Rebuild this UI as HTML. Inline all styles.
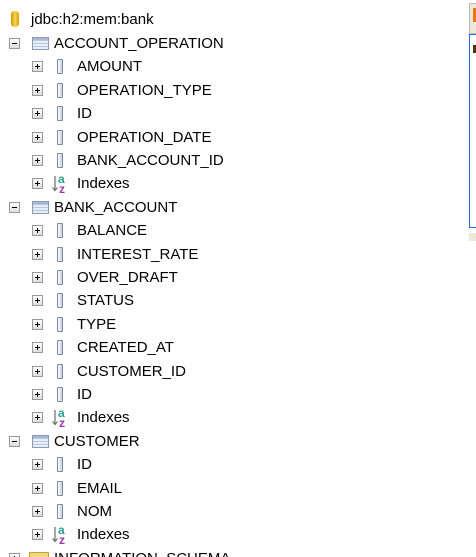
<!DOCTYPE html>
<html><head><style>
html,body{margin:0;width:476px;height:557px;overflow:hidden}
body{background:#fff;font-family:"Liberation Sans",Arial,sans-serif;font-size:15px;color:#000;position:relative}
.r{position:absolute;white-space:nowrap;line-height:18px}
.b{position:absolute;width:9px;height:9px;border:1px solid #999;background:linear-gradient(#fff,#ddd);box-sizing:content-box}
.b:before{content:"";position:absolute;left:2px;top:4px;width:5px;height:1px;background:#000}
.p:after{content:"";position:absolute;left:4px;top:2px;width:1px;height:5px;background:#000}
.c{position:absolute;width:4px;height:13px;border:1px solid #7b8aa6;background:linear-gradient(90deg,#fff,#c8d0e0);border-radius:1px}
.t{position:absolute;width:15px;height:11px;border:1px solid #8a9bb8;background:repeating-linear-gradient(#e8eef8 0 2px,#b9c6dc 2px 3px);}
.t:before{content:"";position:absolute;left:0;top:0;width:15px;height:2px;background:#a8b8d4}
.ix{position:absolute;width:22px;height:20px}
</style></head><body>
<div style="position:absolute;left:11px;top:11px;width:8px;height:16px;background:linear-gradient(90deg,#c89500,#ffd54a,#d8a200);border-radius:4px/3px"></div>
<div class="r" style="left:31px;top:11px">jdbc:h2:mem:bank</div>
<div id="tree"></div>
<div style="position:absolute;left:469px;top:3px;width:10px;height:29px;background:#ece9d8;border:1px solid #bbb"></div>
<div style="position:absolute;left:473px;top:8px;width:3px;height:14px;background:#e07a10"></div>
<div style="position:absolute;left:469px;top:34px;width:10px;height:192px;border:1px solid #2b6ee0;border-right:none"></div>
<div style="position:absolute;left:473px;top:45px;width:3px;height:8px;background:#553300"></div>
<div style="position:absolute;left:469px;top:233px;width:10px;height:8px;background:#ece9d8"></div>
<script>
var rows=[["T","ACCOUNT_OPERATION"],["C","AMOUNT"],["C","OPERATION_TYPE"],["C","ID"],["C","OPERATION_DATE"],["C","BANK_ACCOUNT_ID"],["I","Indexes"],
["T","BANK_ACCOUNT"],["C","BALANCE"],["C","INTEREST_RATE"],["C","OVER_DRAFT"],["C","STATUS"],["C","TYPE"],["C","CREATED_AT"],["C","CUSTOMER_ID"],["C","ID"],["I","Indexes"],
["T","CUSTOMER"],["C","ID"],["C","EMAIL"],["C","NOM"],["I","Indexes"],["F","INFORMATION_SCHEMA"]];
var h="";
rows.forEach(function(r,i){var cy=Math.round(43+23.4*i);var k=r[0];var ty=cy-8;
if(k=="T"){h+='<div class="b" style="left:9px;top:'+(cy-5)+'px"></div><div class="t" style="left:32px;top:'+(cy-6)+'px"></div><div class="r" style="left:54px;top:'+ty+'px">'+r[1]+'</div>';}
else if(k=="F"){h+='<div class="b p" style="left:9px;top:'+(cy-5)+'px"></div><div style="position:absolute;left:29px;top:'+(cy-6)+'px;width:18px;height:12px;background:#f3d77c;border:1px solid #c9a13b"></div><div class="r" style="left:54px;top:'+ty+'px">'+r[1]+'</div>';}
else{h+='<div class="b p" style="left:32px;top:'+(cy-5)+'px"></div>';
if(k=="C")h+='<div class="c" style="left:57px;top:'+(cy-7)+'px"></div>';
else h+='<svg class="ix" style="left:51px;top:'+(cy-10)+'px" viewBox="0 0 22 20"><path d="M4 3V17M1.5 14.5L4 17.5L6.5 14.5" stroke="#777" stroke-width="1.3" fill="none"/><text x="7" y="10" font-size="12" font-weight="bold" fill="#2a9d8f" font-family="Liberation Sans">a</text><text x="8" y="20" font-size="12" font-weight="bold" fill="#9b3aa8" font-family="Liberation Sans">z</text></svg>';
h+='<div class="r" style="left:77px;top:'+ty+'px">'+r[1]+'</div>';}
});
document.getElementById("tree").innerHTML=h;
</script>
</body></html>
